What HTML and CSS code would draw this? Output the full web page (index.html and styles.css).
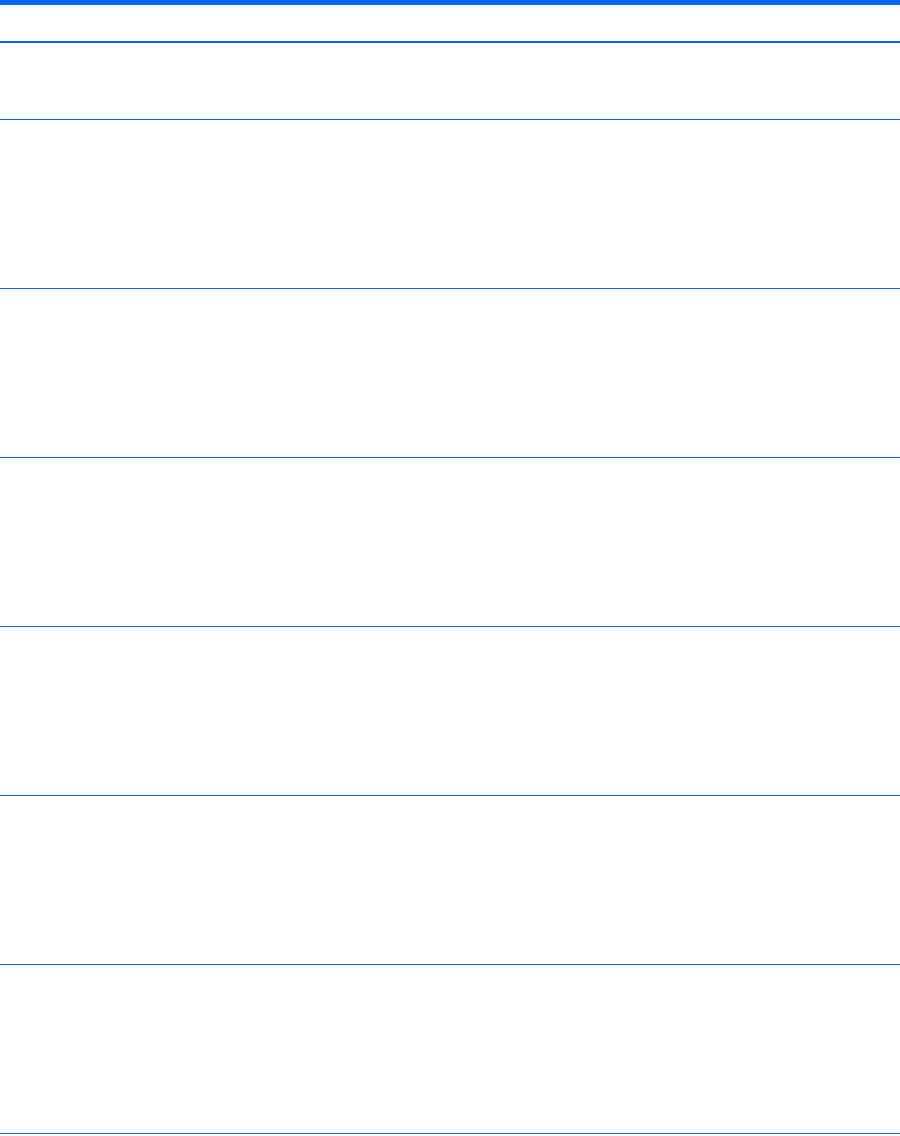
FILE: index.html
```html
<!DOCTYPE html>
<html>
<head>
<meta charset="utf-8">
<link rel="stylesheet" href="styles.css">
</head>
<body>
<div class="table">
  <div class="head"></div>
  <div class="row first"></div>
  <div class="row"></div>
  <div class="row"></div>
  <div class="row"></div>
  <div class="row"></div>
  <div class="row"></div>
  <div class="row"></div>
</div>
</body>
</html>
```
FILE: styles.css
```css
html, body {
  margin: 0;
  padding: 0;
  background: #ffffff;
  font-family: "Liberation Sans", Arial, sans-serif;
}
.table {
  width: 900px;
  display: flex;
  flex-direction: column;
  border-top: 5px solid #0066ff;
}
.head {
  height: 36px;
  border-bottom: 2px solid #0066ff;
}
.row {
  height: 168px;
  border-bottom: 1px solid #0a64ec;
}
.row.first {
  height: 76px;
}
```
